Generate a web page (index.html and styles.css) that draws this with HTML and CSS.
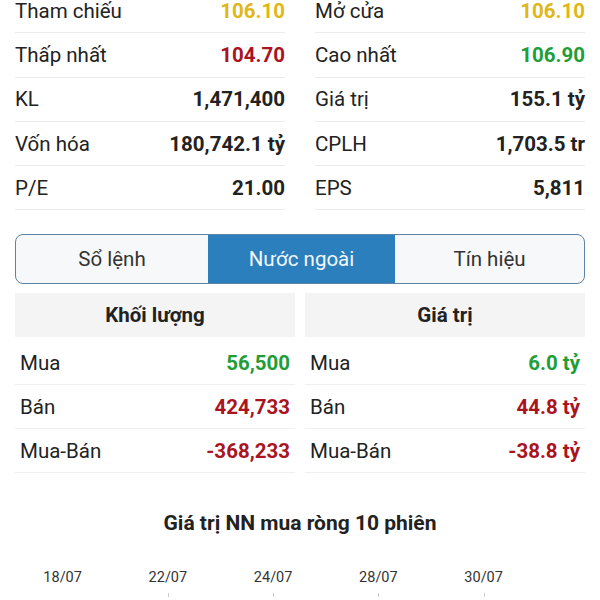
FILE: index.html
```html
<!DOCTYPE html>
<html lang="vi">
<head>
<meta charset="utf-8">
<link rel="stylesheet" href="styles.css">
</head>
<body>
<div class="page">
  <div class="stats">
    <div class="col">
      <div class="row"><span class="lbl">Tham chiếu</span><span class="val ref">106.10</span></div>
      <div class="row"><span class="lbl">Thấp nhất</span><span class="val down">104.70</span></div>
      <div class="row"><span class="lbl">KL</span><span class="val">1,471,400</span></div>
      <div class="row"><span class="lbl">Vốn hóa</span><span class="val">180,742.1 tỷ</span></div>
      <div class="row"><span class="lbl">P/E</span><span class="val">21.00</span></div>
    </div>
    <div class="col">
      <div class="row"><span class="lbl">Mở cửa</span><span class="val ref">106.10</span></div>
      <div class="row"><span class="lbl">Cao nhất</span><span class="val up">106.90</span></div>
      <div class="row"><span class="lbl">Giá trị</span><span class="val">155.1 tỷ</span></div>
      <div class="row"><span class="lbl">CPLH</span><span class="val">1,703.5 tr</span></div>
      <div class="row"><span class="lbl">EPS</span><span class="val">5,811</span></div>
    </div>
  </div>

  <div class="tabs">
    <div class="tab">Sổ lệnh</div>
    <div class="tab active">Nước ngoài</div>
    <div class="tab">Tín hiệu</div>
  </div>

  <div class="foreign">
    <div class="fcol">
      <div class="fhead">Khối lượng</div>
      <div class="frow"><span class="lbl">Mua</span><span class="val up">56,500</span></div>
      <div class="frow"><span class="lbl">Bán</span><span class="val down">424,733</span></div>
      <div class="frow"><span class="lbl">Mua-Bán</span><span class="val down">-368,233</span></div>
    </div>
    <div class="fcol">
      <div class="fhead">Giá trị</div>
      <div class="frow"><span class="lbl">Mua</span><span class="val up">6.0 tỷ</span></div>
      <div class="frow"><span class="lbl">Bán</span><span class="val down">44.8 tỷ</span></div>
      <div class="frow"><span class="lbl">Mua-Bán</span><span class="val down">-38.8 tỷ</span></div>
    </div>
  </div>

  <div class="chart">
    <div class="chart-title">Giá trị NN mua ròng 10 phiên</div>
    <div class="axis">
      <div class="tick"><span>18/07</span></div>
      <div class="tick mark"><span>22/07</span></div>
      <div class="tick mark"><span>24/07</span></div>
      <div class="tick mark"><span>28/07</span></div>
      <div class="tick mark"><span>30/07</span></div>
    </div>
  </div>
</div>
</body>
</html>
```
FILE: styles.css
```css
* { box-sizing: border-box; }
html, body { margin: 0; padding: 0; background: #fff; }
body {
  font-family: Roboto, "Noto Sans", sans-serif;
  color: #222;
  overflow: hidden;
  height: 600px;
}
.page {
  padding: 0 15px;
  margin-top: -11px;
}
.stats {
  display: grid;
  grid-template-columns: 1fr 1fr;
  column-gap: 30px;
}
.row {
  height: 44.3px;
  display: flex;
  align-items: center;
  justify-content: space-between;
  border-bottom: 1px solid #ececec;
  font-size: 20.5px;
}
.val { font-weight: 700; }
.ref { color: #dfb717; }
.down { color: #a9141f; }
.up { color: #1f9e37; }

.tabs {
  margin-top: 24px;
  height: 50px;
  display: grid;
  grid-template-columns: 192px 187px 1fr;
  border: 1.5px solid #5d84a6;
  border-radius: 8px;
  overflow: hidden;
  background: #f7f8f9;
}
.tab {
  display: flex;
  align-items: center;
  justify-content: center;
  font-size: 20.5px;
  color: #333;
}
.tab.active {
  background: #2c7fbd;
  color: #f2f7fb;
}

.foreign {
  margin-top: 9px;
  display: grid;
  grid-template-columns: 1fr 1fr;
  column-gap: 10px;
}
.fhead {
  height: 44px;
  margin-bottom: 4px;
  background: #f4f4f4;
  display: flex;
  align-items: center;
  justify-content: center;
  font-weight: 700;
  font-size: 20.5px;
  color: #222;
}
.frow {
  height: 44px;
  padding: 0 5px;
  display: flex;
  align-items: center;
  justify-content: space-between;
  border-bottom: 1px solid #f0f0f0;
  font-size: 20.5px;
}
.chart {
  margin-top: 38px;
}
.chart-title {
  text-align: center;
  font-weight: 700;
  font-size: 21px;
  line-height: 24px;
  color: #222;
}
.axis {
  margin-top: 34px;
  margin-left: -5px;
  display: grid;
  grid-template-columns: repeat(5, 105.25px);
}
.tick {
  position: relative;
  text-align: center;
  font-size: 14.5px;
  line-height: 17px;
  color: #333;
  height: 34px;
}
.tick.mark::after {
  content: "";
  position: absolute;
  left: 50%;
  top: 24px;
  width: 1px;
  height: 4px;
  background: #ccc;
}
```
